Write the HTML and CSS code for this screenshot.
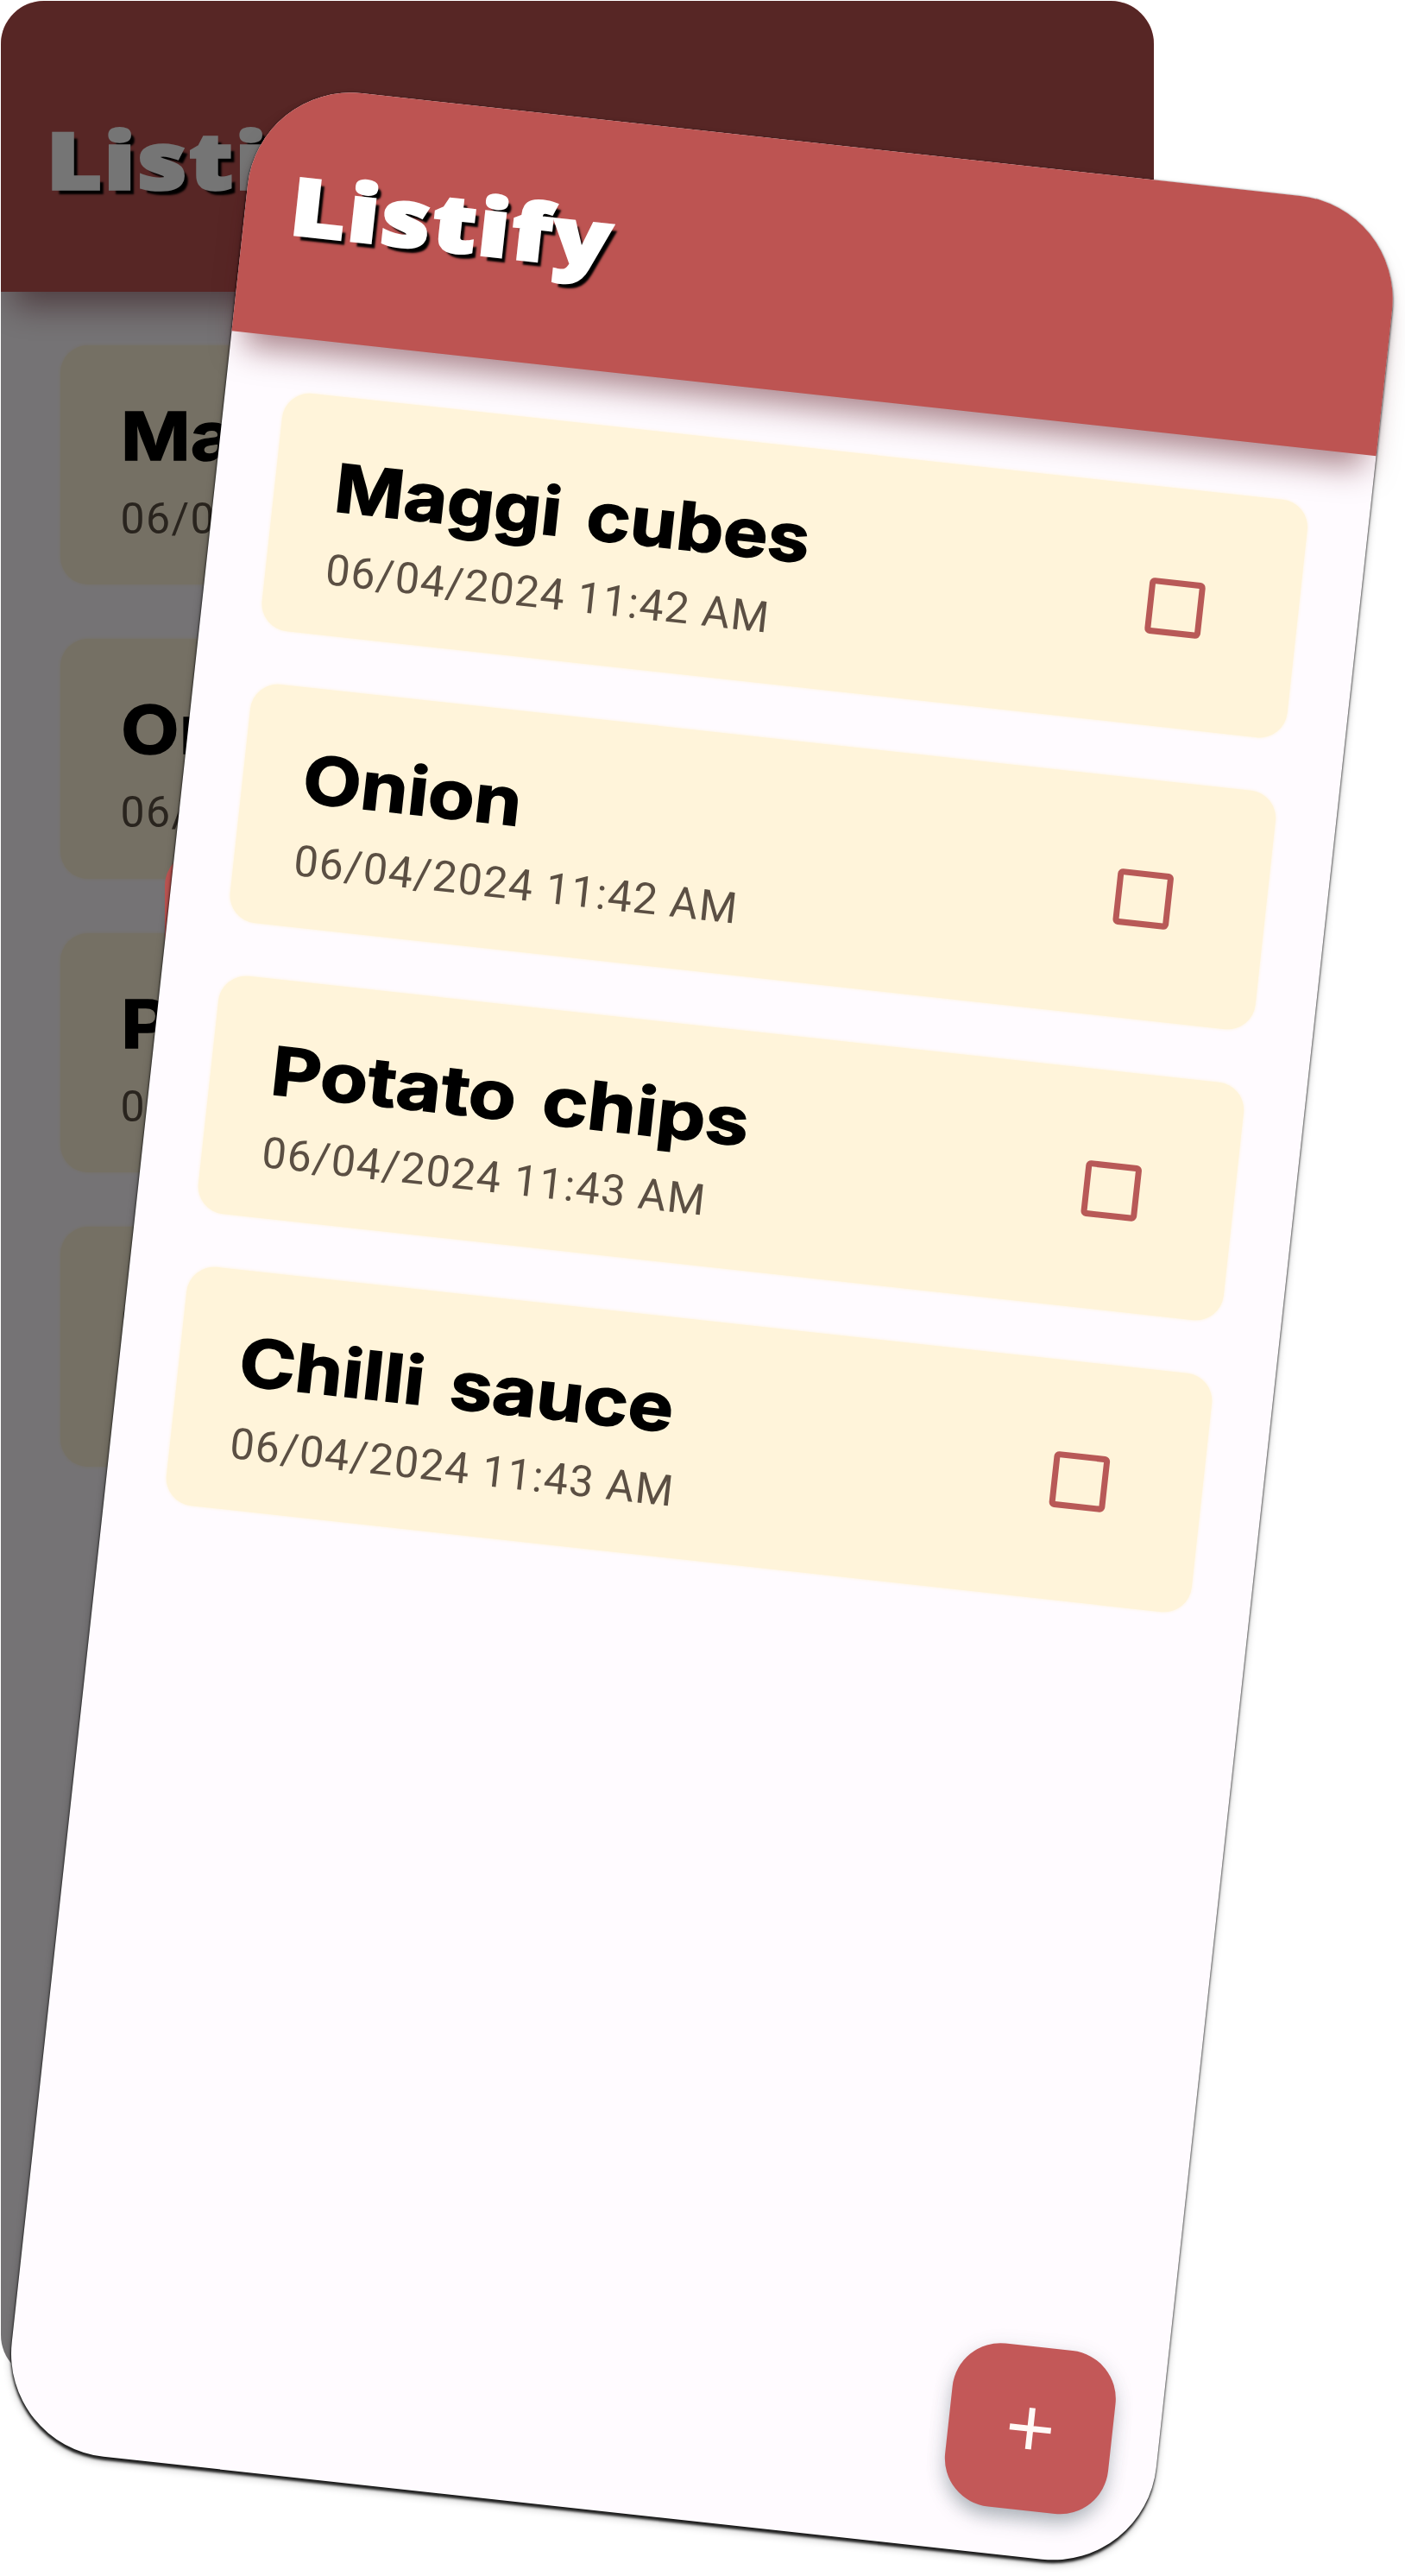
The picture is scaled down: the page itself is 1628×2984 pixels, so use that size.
FILE: index.html
```
<!DOCTYPE html>
<html lang="en">
<head>
<meta charset="utf-8">
<title>Listify</title>
<link rel="stylesheet" href="styles.css">
</head>
<body>
<main class="stage">
  <section class="phone phone-back">
    <header class="bar"><h1 class="brand">Listify</h1></header>
    <ul class="list">
      <li class="card"><div><h2 class="name maggi">Maggi cubes</h2><p class="date">06/04/2024 11:42 AM</p></div><span class="check"></span></li>
      <li class="card"><div><h2 class="name onion">Onion</h2><p class="date">06/04/2024 11:42 AM</p></div><span class="check"></span></li>
      <li class="card"><div><h2 class="name potato">Potato chips</h2><p class="date">06/04/2024 11:43 AM</p></div><span class="check"></span></li>
      <li class="card"><div><h2 class="name chilli">Chilli sauce</h2><p class="date">06/04/2024 11:43 AM</p></div><span class="check"></span></li>
    </ul>
    <div class="scrim"></div>
    <div class="dialog-button"></div>
  </section>
  <section class="phone phone-front">
    <header class="bar"><h1 class="brand">Listify</h1></header>
    <ul class="list">
      <li class="card"><div><h2 class="name maggi">Maggi cubes</h2><p class="date">06/04/2024 11:42 AM</p></div><span class="check"></span></li>
      <li class="card"><div><h2 class="name onion">Onion</h2><p class="date">06/04/2024 11:42 AM</p></div><span class="check"></span></li>
      <li class="card"><div><h2 class="name potato">Potato chips</h2><p class="date">06/04/2024 11:43 AM</p></div><span class="check"></span></li>
      <li class="card"><div><h2 class="name chilli">Chilli sauce</h2><p class="date">06/04/2024 11:43 AM</p></div><span class="check"></span></li>
    </ul>
    <button class="fab" aria-label="Add item">
      <svg width="50" height="50" viewBox="0 0 50 50"><path d="M25 1v48M1 25h48" stroke="#fffaf7" stroke-width="7" fill="none"/></svg>
    </button>
  </section>
</main>
</body>
</html>
```
FILE: styles.css
```
* { box-sizing: border-box; }
html, body { margin: 0; background: #fff; }
h1, h2, p, ul { margin: 0; padding: 0; }

.stage {
  position: relative;
  width: 1628px;
  height: 2984px;
  overflow: hidden;
}

.phone {
  position: absolute;
  isolation: isolate;
  display: flex;
  flex-direction: column;
  background: #fffbff;
}
.phone-back {
  left: 1px;
  top: 1px;
  width: 1336px;
  height: 2754px;
  border-radius: 50px;
  overflow: hidden;
}
.phone-front {
  left: 300.2px;
  top: 94.9px;
  width: 1334px;
  height: 2754px;
  border-radius: 120px;
  transform: rotate(6.24deg);
  transform-origin: 0 0;
  box-shadow: 0 0 2px rgba(0, 0, 0, .5), 0 4px 3px rgba(0, 0, 0, .85), 0 5px 10px rgba(0, 0, 0, .25);
}

.bar {
  position: relative;
  z-index: 1;
  display: flex;
  align-items: flex-end;
  flex: none;
  height: 337px;
  padding: 0 0 108px 53px;
  background: #bd5452;
  box-shadow: 0 30px 36px -14px rgba(90, 20, 30, .5);
}
.phone-front .bar {
  height: 290px;
  border-radius: 120px 120px 0 0;
}
.brand {
  font: 800 91px/92px "Open Sans", sans-serif;
  letter-spacing: 2.5px;
  color: #fff;
  -webkit-text-stroke: 3.5px #fff;
  text-shadow: 5px 6px 2px #000;
  transform: scaleX(1.205);
  transform-origin: 0 0;
}

.list {
  list-style: none;
  display: flex;
  flex-direction: column;
  gap: 63px;
  padding: 61.5px 70px 0 68.5px;
}
.phone-front .list { gap: 62px; }
.card {
  display: flex;
  justify-content: space-between;
  align-items: center;
  height: 277.5px;
  padding: 0 110px 0 70px;
  border-radius: 32px;
  background: #fff4da;
  box-shadow: 0 0 4px #fff4da;
}
.card > div {
  align-self: flex-start;
  padding-top: 67px;
}
.name {
  font: 700 77px/77px Inter, sans-serif;
  color: #000;
  -webkit-text-stroke: 1.5px #000;
  word-spacing: 8px;
  white-space: nowrap;
  transform: scaleX(1.125);
  transform-origin: 0 0;
}
.onion { transform: scaleX(1.14); }
.potato { transform: scaleX(1.168); }
.chilli { transform: scaleX(1.145); }
.date {
  margin-top: 32px;
  font: 400 50px/50px Roboto, sans-serif;
  letter-spacing: 1.35px;
  color: #5b4f43;
  white-space: nowrap;
}
.check {
  width: 65px;
  height: 65px;
  border: 7px solid #b85957;
  border-radius: 6px;
}

.scrim {
  position: absolute;
  inset: 0;
  z-index: 2;
  background: rgba(0, 0, 0, .54);
}
.dialog-button {
  position: absolute;
  z-index: 3;
  left: 190px;
  top: 985px;
  width: 300px;
  height: 150px;
  border-radius: 40px;
  background: #bd5452;
}

.fab {
  position: absolute;
  right: 55px;
  bottom: 54px;
  display: grid;
  place-items: center;
  width: 190px;
  height: 190px;
  padding: 0;
  border: 0;
  border-radius: 56px;
  background: #c35858;
  box-shadow: 0 14px 22px -4px rgba(50, 70, 80, .35), 0 4px 24px rgba(50, 70, 80, .12);
}
```
